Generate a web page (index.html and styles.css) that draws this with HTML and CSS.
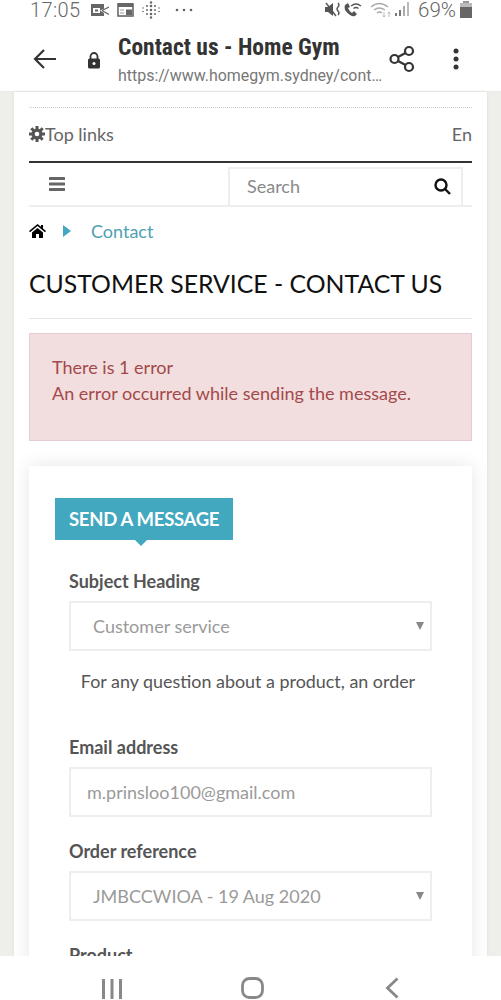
FILE: index.html
```html
<!DOCTYPE html>
<html lang="en">
<head>
    <meta charset="UTF-8">
    <meta name="viewport" content="width=device-width, initial-scale=1.0">
    <title>Contact us - Home Gym</title>
    <link rel="stylesheet" href="styles.css">
</head>
<body>
    <div class="phone">
        <div class="status-bar">
            <span class="clock">17:05</span>
            <svg class="status-icon" width="18" height="12" viewBox="0 0 18 12"><rect x="0" y="0" width="13" height="12" fill="#666"/><rect x="2" y="4" width="7" height="5" fill="#fff"/><rect x="4" y="5.500" width="3" height="2" fill="#666"/><path d="M9 6.500l9-4v2l-5 2 5 3v2.500z" fill="#fff"/><path d="M11 6.500l7-3.500M11 6.500l7 4" stroke="#666" stroke-width="1.200" fill="none"/></svg>
            <svg class="status-icon" width="17" height="14" viewBox="0 0 17 14"><rect x="1" y="1" width="15" height="12" fill="none" stroke="#666" stroke-width="1.600"/><rect x="1" y="0" width="15" height="4" fill="#666"/><rect x="9" y="6.500" width="6" height="5.500" fill="#666"/><path d="M3 7h4M3 10h4" stroke="#999"/></svg>
            <svg class="status-icon" width="18" height="18" viewBox="0 0 18 18" fill="#666"><circle cx="9" cy="1.500" r="1.200"/><circle cx="9" cy="16.500" r="1.200"/><circle cx="1" cy="7" r=".8"/><circle cx="1" cy="10.500" r=".8"/><circle cx="17" cy="7" r=".8"/><circle cx="17" cy="10.500" r=".8"/><circle cx="5" cy="5" r="1"/><circle cx="5" cy="9" r="1"/><circle cx="5" cy="13" r="1"/><circle cx="9" cy="5" r="1.300"/><circle cx="9" cy="9" r="1.300"/><circle cx="9" cy="13" r="1.300"/><circle cx="13" cy="5" r="1"/><circle cx="13" cy="9" r="1"/><circle cx="13" cy="13" r="1"/></svg>
            <svg class="status-icon dots" width="18" height="4" viewBox="0 0 18 4" fill="#666"><circle cx="2" cy="2" r="1.300"/><circle cx="9" cy="2" r="1.300"/><circle cx="16" cy="2" r="1.300"/></svg>
            <div class="status-right">
                <svg width="17" height="15" viewBox="0 0 17 15"><path d="M0 5h3l5-4v13l-5-4H0z" fill="#555"/><path d="M1 1l10 13" stroke="#555" stroke-width="1.400"/><path d="M13 1q2 2 0 4t0 4 0 4" fill="none" stroke="#555" stroke-width="1.400"/></svg>
                <svg class="call-icon" width="19" height="16" viewBox="0 0 19 16"><path d="M2 3l3-2 2 4-2 1q1 3 4 5l2-2 3 3-2 2q-2 1-5-1T2 8q-1-3 0-5z" fill="#555"/><path d="M8 4q5-4 10 0M10.500 6.500q2.500-2 5 0" fill="none" stroke="#555" stroke-width="1.300"/></svg>
                <svg class="wifi-icon" width="22" height="16" viewBox="0 0 22 16"><path d="M1 5q8-7 17 0M4 8q5-4 11 0M7 11q2.500-2 5 0" fill="none" stroke="#aaa" stroke-width="1.400"/><path d="M14 10v5M12.500 13.500l1.500 1.500 1.500-1.500M19 15v-5M17.500 11.500l1.500-1.500 1.500 1.500" fill="none" stroke="#bbb"/></svg>
                <svg width="16" height="15" viewBox="0 0 16 15" fill="#777"><rect x="0" y="11" width="2" height="3"/><rect x="4" y="8" width="2" height="6"/><rect x="8" y="4" width="2" height="10" fill="#aaa"/><rect x="12" y="0" width="2" height="14" fill="#bbb"/></svg>
                <span class="battery-text">69%</span>
                <svg width="12" height="17" viewBox="0 0 12 17"><rect x="3" y="0" width="6" height="2" fill="#999"/><rect x="0" y="2" width="12" height="4" fill="#bbb"/><rect x="0" y="6" width="12" height="11" fill="#666"/></svg>
            </div>
        </div>

        <header class="browser-bar">
            <svg class="back-icon" width="24" height="22" viewBox="0 0 24 22"><path d="M23 11H2M11 2l-9 9 9 9" fill="none" stroke="#333" stroke-width="2.200"/></svg>
            <svg class="lock-icon" width="14" height="17" viewBox="0 0 14 17"><path d="M3.500 7V4.500a3.500 3.500 0 0 1 7 0V7" fill="none" stroke="#333" stroke-width="1.800"/><rect x="1" y="6.500" width="12" height="10" rx="1.500" fill="#333"/><circle cx="7" cy="11.500" r="1.500" fill="#fff"/></svg>
            <div class="browser-title">
                <div class="page-title">Contact us - Home Gym</div>
                <div class="page-url">https://www.homegym.sydney/cont…</div>
            </div>
            <svg class="share-icon" width="26" height="28" viewBox="0 0 26 28" fill="none" stroke="#333" stroke-width="2.200"><circle cx="20" cy="6" r="4"/><circle cx="5.500" cy="14" r="4"/><circle cx="20" cy="22" r="4"/><path d="M9 12l7.500-4M9 16l7.500 4"/></svg>
            <svg class="more-icon" width="6" height="22" viewBox="0 0 6 22" fill="#333"><circle cx="3" cy="3" r="2.500"/><circle cx="3" cy="11" r="2.500"/><circle cx="3" cy="19" r="2.500"/></svg>
        </header>

        <div class="page">
            <main class="content">
                <div class="top-links">
                    <span class="top-links-left">
                        <svg width="16" height="16" viewBox="0 0 16 16"><g stroke="#555" stroke-width="3"><path d="M8 0v16M0 8h16M2.300 2.300l11.400 11.400M13.700 2.300L2.300 13.700"/></g><circle cx="8" cy="8" r="5.500" fill="#555"/><circle cx="8" cy="8" r="2.300" fill="#fff"/></svg>Top links
                    </span>
                    <span>En</span>
                </div>

                <div class="menu-row">
                    <svg class="burger" width="16" height="14" viewBox="0 0 16 14" fill="#666"><rect y="0" width="16" height="3" rx=".5"/><rect y="5.500" width="16" height="3" rx=".5"/><rect y="11" width="16" height="3" rx=".5"/></svg>
                    <div class="search-box">
                        <span>Search</span>
                        <svg width="17" height="17" viewBox="0 0 17 17" fill="none" stroke="#111" stroke-width="2.400"><circle cx="7" cy="7" r="5.500"/><path d="M11 11l5 5"/></svg>
                    </div>
                </div>

                <div class="breadcrumb">
                    <svg width="17" height="14" viewBox="0 0 17 14" fill="#000"><path d="M8.500 0L0 7l1 1.200L8.500 2 16 8.200 17 7l-3-2.500V1h-2v1.800z"/><path d="M3 8.500L8.500 4 14 8.500V14h-4v-4H7v4H3z"/></svg>
                    <svg class="crumb-arrow" width="8" height="12" viewBox="0 0 8 12" fill="#42a8c0"><path d="M0 0l8 6-8 6z"/></svg>
                    <a class="crumb-link">Contact</a>
                </div>

                <h1 class="page-heading">CUSTOMER SERVICE - CONTACT US</h1>

                <div class="alert">
                    <p>There is 1 error</p>
                    <p>An error occurred while sending the message.</p>
                </div>

                <section class="contact-card">
                    <h2 class="card-title">SEND A MESSAGE</h2>

                    <div class="form-fields">
                        <label class="field-label">Subject Heading</label>
                        <div class="field field-select">
                            <span>Customer service</span>
                            <i class="caret"></i>
                        </div>
                        <p class="field-hint">For any question about a product, an order</p>

                        <label class="field-label">Email address</label>
                        <div class="field field-input">m.prinsloo100@gmail.com</div>

                        <label class="field-label">Order reference</label>
                        <div class="field field-select">
                            <span>JMBCCWIOA - 19 Aug 2020</span>
                            <i class="caret"></i>
                        </div>

                        <label class="field-label">Product</label>
                    </div>
                </section>
            </main>
        </div>

        <nav class="nav-bar">
            <svg width="22" height="20" viewBox="0 0 22 20" fill="#888"><rect x="1" y="0" width="3" height="20"/><rect x="9.500" y="0" width="3" height="20"/><rect x="18" y="0" width="3" height="20"/></svg>
            <svg width="23" height="22" viewBox="0 0 23 22" fill="none" stroke="#888" stroke-width="2.800"><rect x="1.500" y="1.500" width="20" height="19" rx="7"/></svg>
            <svg class="nav-back" width="14" height="22" viewBox="0 0 14 22" fill="none" stroke="#888" stroke-width="2.800"><path d="M12.500 1.500L2.500 11l10 9.500"/></svg>
        </nav>
    </div>
</body>
</html>
```

FILE: styles.css
```css
* {
    margin: 0;
    padding: 0;
    box-sizing: border-box;
    font-family: 'Lato', sans-serif;
}

:root {
    --teal: #42a8c0;
    --text: #555;
    --line: #eeeeee;
}

html, body {
    height: 100%;
    overflow: hidden;
}

body {
    background-color: #fff;
    color: var(--text);
}

.phone {
    width: 501px;
    height: 1000px;
    display: flex;
    flex-direction: column;
    overflow: hidden;
}

.status-bar {
    height: 30px;
    flex-shrink: 0;
    padding: 0 29px 11px 30px;
    display: flex;
    align-items: center;
    gap: 8px;
    color: #666;
}

.clock {
    font-family: 'Roboto', sans-serif;
    font-size: 20px;
    line-height: 18px;
    font-weight: 300;
    margin-right: 2px;
    letter-spacing: .4px;
}

.status-icon.dots {
    margin-left: 7px;
}

.status-right {
    margin-left: auto;
    display: flex;
    align-items: center;
}

.call-icon {
    margin-left: 1px;
}

.wifi-icon {
    margin: 0 3px 0 8px;
}

.battery-text {
    font-family: 'Roboto', sans-serif;
    font-size: 20.500px;
    line-height: 18px;
    font-weight: 300;
    margin: 0 4px 0 7px;
}

.browser-bar {
    height: 62px;
    flex-shrink: 0;
    display: flex;
    align-items: center;
    padding: 0 0 3px 33px;
    border-bottom: 1px solid #ececec;
}

.lock-icon {
    margin-left: 30px;
    margin-top: 2px;
}

.browser-title {
    width: 262px;
    margin-left: 17px;
    margin-right: 9px;
    padding-top: 2px;
}

.page-title {
    font-family: 'Roboto', sans-serif;
    font-stretch: condensed;
    font-size: 23.500px;
    font-weight: 700;
    color: #333;
    line-height: 28px;
    white-space: nowrap;
}

.page-url {
    font-family: 'Roboto', sans-serif;
    font-size: 16.500px;
    color: #777;
    line-height: 24px;
    margin-top: 3px;
    white-space: nowrap;
    transform-origin: left;
    transform: scaleX(.967);
}

.more-icon {
    margin-left: 38px;
}

.page {
    flex: 1;
    min-height: 0;
    background-color: #eeefea;
    padding: 0 14px;
}

.content {
    height: 100%;
    background-color: #fff;
    padding: 15px 15px 0;
    overflow: hidden;
    box-shadow: 0 0 3px rgba(0, 0, 0, 0.08);
}

.top-links {
    height: 56px;
    border-top: 1px dotted #ccc;
    border-bottom: 2px solid #333;
    padding-bottom: 2px;
    display: flex;
    justify-content: space-between;
    align-items: center;
    font-size: 18px;
    color: #666;
}

.top-links-left {
    display: flex;
    align-items: center;
}

.menu-row {
    height: 44px;
    border-bottom: 2px solid var(--line);
    display: flex;
    align-items: center;
    justify-content: space-between;
    padding: 0 9px 0 20px;
}

.search-box {
    width: 235px;
    height: 38px;
    align-self: flex-end;
    border: 2px solid var(--line);
    border-bottom: 0;
    padding: 0 10px 2px 17px;
    display: flex;
    align-items: center;
    justify-content: space-between;
    font-size: 18px;
    color: #8a8a8a;
}

.breadcrumb {
    height: 47px;
    display: flex;
    align-items: center;
}

.crumb-arrow {
    margin-left: 17px;
}

.crumb-link {
    margin-left: 20px;
    font-size: 18px;
    color: #4f9fb3;
}

.page-heading {
    font-size: 24.800px;
    font-weight: 400;
    color: #111;
    line-height: 30px;
    padding: 15px 0 19px;
    border-bottom: 1px solid #e4e4e4;
    white-space: nowrap;
}

.alert {
    margin-top: 14px;
    height: 108px;
    background-color: #f2dede;
    border: 1px solid #e6ccd0;
    padding: 21px 22px;
    font-size: 18px;
    line-height: 25.500px;
    color: #a3494b;
}

.contact-card {
    margin-top: 25px;
    padding: 32px 26px 0;
    height: 520px;
    box-shadow: 0 0 18px rgba(0, 0, 0, 0.1);
}

.card-title {
    position: relative;
    display: inline-block;
    vertical-align: top;
    height: 42px;
    padding: 0 14px;
    background-color: var(--teal);
    color: #fff;
    font-size: 18.500px;
    font-weight: 700;
    line-height: 42px;
    letter-spacing: -.3px;
}

/* little pointer under the title */
.card-title::after {
    content: '';
    position: absolute;
    left: 80px;
    bottom: -6px;
    border-left: 6px solid transparent;
    border-right: 6px solid transparent;
    border-top: 6px solid var(--teal);
}

.form-fields {
    padding: 7px 14px 0;
}

.field-label {
    display: block;
    font-size: 18px;
    font-weight: 700;
    color: #555;
    line-height: 22px;
    margin-top: 23px;
    margin-bottom: 9px;
}

.field {
    height: 50px;
    border: 2px solid var(--line);
    padding-bottom: 1px;
    display: flex;
    align-items: center;
    font-size: 18px;
    color: #9a9a9a;
}

.field-select {
    justify-content: space-between;
    padding-left: 22px;
    padding-right: 6px;
}

.field-input {
    padding-left: 16px;
    padding-right: 16px;
}

.caret {
    border-left: 4px solid transparent;
    border-right: 4px solid transparent;
    border-top: 8px solid #888;
}

.field-hint {
    font-size: 17.900px;
    color: #555;
    text-align: center;
    line-height: 24px;
    margin-top: 18px;
    margin-bottom: 43px;
    padding-right: 5px;
    white-space: nowrap;
}

.nav-bar {
    height: 44px;
    flex-shrink: 0;
    background-color: #fff;
    display: flex;
    align-items: flex-end;
    gap: 118px;
    padding: 0 0 1px 101px;
}

.nav-back {
    margin-left: 3px;
}
```
